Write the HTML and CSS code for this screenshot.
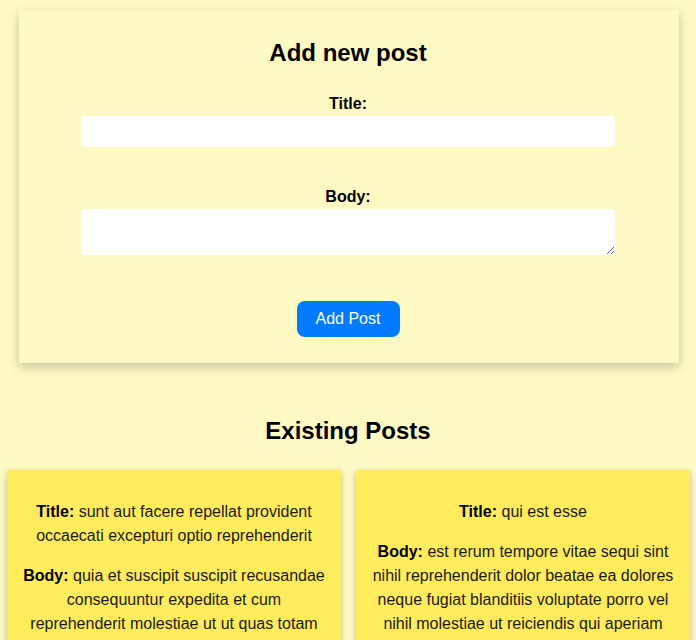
FILE: index.html
```html
<!DOCTYPE html>
<html lang="en">
<head>
<meta charset="utf-8">
<title>Posts</title>
<link rel="stylesheet" href="styles.css">
</head>
<body>
  <section class="form-card">
    <h2 class="form-title">Add new post</h2>
    <form class="post-form">
      <div class="field">
        <label class="field-label" for="title">Title:</label>
        <input class="field-input" id="title" type="text">
      </div>
      <div class="field">
        <label class="field-label" for="body">Body:</label>
        <textarea class="field-textarea" id="body"></textarea>
      </div>
      <button class="submit-btn" type="button">Add Post</button>
    </form>
  </section>

  <h2 class="posts-title">Existing Posts</h2>
  <div class="posts-grid">
    <article class="post-card">
      <p><strong>Title:</strong> sunt aut facere repellat provident occaecati excepturi optio reprehenderit</p>
      <p><strong>Body:</strong> quia et suscipit suscipit recusandae consequuntur expedita et cum reprehenderit molestiae ut ut quas totam nostrum rerum est autem sunt rem eveniet architecto</p>
    </article>
    <article class="post-card">
      <p><strong>Title:</strong> qui est esse</p>
      <p><strong>Body:</strong> est rerum tempore vitae sequi sint nihil reprehenderit dolor beatae ea dolores neque fugiat blanditiis voluptate porro vel nihil molestiae ut reiciendis qui aperiam non debitis possimus qui neque nisi nulla</p>
    </article>
  </div>
</body>
</html>
```

FILE: styles.css
```css
html, body {
  margin: 0;
  padding: 0;
}
body {
  background: #fff9c4;
  font-family: "Liberation Sans", Arial, sans-serif;
  color: #000;
}
.form-card {
  width: 660px;
  box-sizing: border-box;
  margin: 10px 17px 0 19px;
  padding: 29px 0 26px;
  background: #fff9c4;
  box-shadow: 0 4px 10px rgba(0, 0, 0, 0.22);
  text-align: center;
}
.form-title {
  margin: 0 0 28px -2px;
  font-size: 24px;
  line-height: 28px;
}
.post-form {
  display: flex;
  flex-direction: column;
  align-items: center;
}
.field {
  display: flex;
  flex-direction: column;
  align-items: center;
  margin-bottom: 41px;
}
.field:nth-child(2) {
  margin-bottom: 46px;
}
.field-label {
  font-weight: bold;
  font-size: 16px;
  line-height: 18px;
  margin: 0 0 3px -2px;
}
.field-input,
.field-textarea {
  width: 534px;
  box-sizing: border-box;
  border: none;
  border-radius: 4px;
  background: #fff;
  font-family: inherit;
  font-size: 16px;
  padding: 6px 8px;
  margin-left: -2px;
}
.field-input {
  height: 31px;
}
.field-textarea {
  height: 46px;
  display: block;
}
.submit-btn {
  width: 103px;
  height: 36px;
  margin-left: -2px;
  background: #007bff;
  color: #fff;
  border: none;
  border-radius: 8px;
  font-family: inherit;
  font-size: 16px;
}
.posts-title {
  margin: 54px 0 25px;
  text-align: center;
  font-size: 24px;
  line-height: 28px;
}
.posts-grid {
  display: grid;
  grid-template-columns: 1fr 1fr;
  gap: 15px;
  padding: 0 6px 0 7px;
}
.post-card {
  background: #ffec5c;
  box-shadow: 0 2px 6px rgba(0, 0, 0, 0.25);
  padding: 14px 15px;
  text-align: center;
  font-size: 16px;
  line-height: 24px;
  color: #1a1a1a;
}
.post-card strong {
  color: #000;
}
```
